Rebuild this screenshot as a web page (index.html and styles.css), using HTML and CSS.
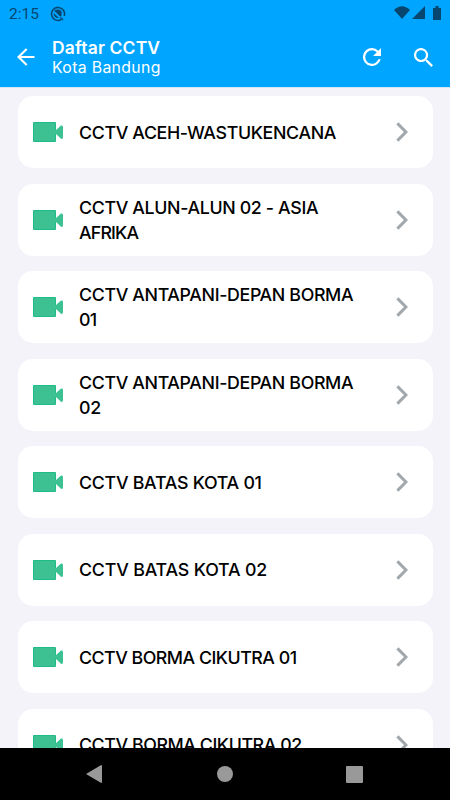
FILE: index.html
```html
<!DOCTYPE html>
<html lang="id">
<head>
<meta charset="utf-8">
<meta name="viewport" content="width=device-width, initial-scale=1">
<title>Daftar CCTV</title>
<link rel="stylesheet" href="styles.css">
</head>
<body>
<svg width="0" height="0" class="defs">
  <symbol id="cam" viewBox="0 0 31 20"><path fill="#3dc192" d="M1 0H22Q23 0 23 1V8L28 3.6Q30 3 30 5V15Q30 17.5 28 16.7L23 12V19Q23 20 22 20H1Q0 20 0 19V1Q0 0 1 0Z"/><path fill="none" stroke="#12b886" stroke-opacity=".7" d="M22.5 8V1.5Q22.5.5 21.5 .5H1.5Q.5.5.5 1.5V18.5Q.5 19.5 1.5 19.5H21.5Q22.5 19.5 22.5 18.5V12"/></symbol>
  <symbol id="chev" viewBox="0 0 12 20"><path fill="none" stroke="#a2a7ab" stroke-width="3" d="M1.4 1.4 10 10 1.4 18.6"/></symbol>
</svg>
<div class="screen">
  <header class="top">
    <div class="status">
      <span class="time">2:15</span>
      <svg class="notif" width="16" height="16" viewBox="0 0 16 16"><path d="M11.2 13.6A6.5 6.5 0 1 1 14.2 10" fill="none" stroke="#06466f" stroke-width="1.6"/><path d="M4 5Q7 2.5 10.5 4.2L11.8 6.2 11.5 9.8 10.2 10.8 6 6.2ZM3.6 7 9 12Q5.4 12.6 4 9.6Z" fill="#06466f"/><path d="M10.5 11.5 13 14" stroke="#06466f" stroke-width="1.4"/></svg>
      <svg class="signals" width="48" height="15" viewBox="0 0 48 15"><path fill="#06466f" d="M0 4Q8-3.5 16 4L8 13ZM31 0V13H18ZM39 2H41.5V0H44.5V2H47V14H39Z"/></svg>
    </div>
    <div class="bar">
      <svg class="back" width="18" height="18" viewBox="0 0 18 18"><path d="M17.5 9H2M9.7 1 1.5 9 9.7 17" fill="none" stroke="#fff" stroke-width="2.1"/></svg>
      <div class="titles"><h1>Daftar CCTV</h1><p>Kota Bandung</p></div>
      <svg class="refresh" width="18" height="18" viewBox="4 4 16 16"><path fill="#fff" d="M17.65 6.35A7.96 7.96 0 0 0 12 4a8 8 0 1 0 7.73 10h-2.08A6 6 0 1 1 12 6c1.66 0 3.14.69 4.22 1.78L13 11h7V4z"/></svg>
      <svg class="search" width="19" height="19" viewBox="3 3 17.5 17.5"><path fill="#fff" d="M15.5 14h-.79l-.28-.27A6.5 6.5 0 1 0 13.73 14.43l.27.28v.79l5 4.99L20.49 19zm-6 0a4.5 4.5 0 1 1 0-9 4.5 4.5 0 0 1 0 9z"/></svg>
    </div>
  </header>
  <main class="list">
    <div class="card"><svg class="cam"><use href="#cam"/></svg><div class="name"><span>CCTV ACEH-WASTUKENCANA</span></div><svg class="chev"><use href="#chev"/></svg></div>
    <div class="card"><svg class="cam"><use href="#cam"/></svg><div class="name"><span>CCTV ALUN-ALUN 02 - ASIA</span><span class="tighter">AFRIKA</span></div><svg class="chev"><use href="#chev"/></svg></div>
    <div class="card"><svg class="cam"><use href="#cam"/></svg><div class="name"><span>CCTV ANTAPANI-DEPAN BORMA</span><span class="tighter">01</span></div><svg class="chev"><use href="#chev"/></svg></div>
    <div class="card"><svg class="cam"><use href="#cam"/></svg><div class="name"><span>CCTV ANTAPANI-DEPAN BORMA</span><span class="loose">02</span></div><svg class="chev"><use href="#chev"/></svg></div>
    <div class="card"><svg class="cam"><use href="#cam"/></svg><div class="name"><span class="normal">CCTV BATAS KOTA 01</span></div><svg class="chev"><use href="#chev"/></svg></div>
    <div class="card"><svg class="cam"><use href="#cam"/></svg><div class="name"><span class="loose">CCTV BATAS KOTA 02</span></div><svg class="chev"><use href="#chev"/></svg></div>
    <div class="card"><svg class="cam"><use href="#cam"/></svg><div class="name"><span class="tight">CCTV BORMA CIKUTRA 01</span></div><svg class="chev"><use href="#chev"/></svg></div>
    <div class="card"><svg class="cam"><use href="#cam"/></svg><div class="name"><span class="snug">CCTV BORMA CIKUTRA 02</span></div><svg class="chev"><use href="#chev"/></svg></div>
  </main>
  <nav class="nav">
    <svg width="16" height="18" viewBox="0 0 16 18"><path fill="#999" d="M0 9 14.8.2Q16-.2 16 1V17Q16 18.2 14.8 17.8Z"/></svg>
    <svg class="home" width="16" height="16" viewBox="0 0 16 16"><circle cx="8" cy="8" r="8" fill="#999"/></svg>
    <svg width="17" height="17" viewBox="0 0 17 17"><rect width="17" height="17" rx="1" fill="#999"/></svg>
  </nav>
</div>
</body>
</html>
```

FILE: styles.css
```css
* { box-sizing: border-box; margin: 0; padding: 0; }
body { font-family: Inter, "Liberation Sans", sans-serif; background: #f3f3f9; }
svg { display: block; flex: none; }
.defs { position: absolute; }
.screen { width: 450px; height: 800px; display: flex; flex-direction: column; overflow: hidden; }
.top { height: 87px; flex: none; background: #00a5ff; box-shadow: 0 1px 0 #d3e7f5; }
.status { height: 27px; display: flex; align-items: center; padding: 0 8px 0 9px; color: #06466f; }
.time { font: 15.5px/18px Roboto, sans-serif; letter-spacing: 0; width: 41px; }
.signals { margin-left: auto; }
.bar { height: 60px; display: flex; align-items: center; padding: 0 16px 0 17px; color: #fff; }
.titles { width: 292px; margin-left: 17px; }
.titles h1 { font-size: 17.5px; line-height: 21px; font-weight: 600; letter-spacing: .15px; }
.titles p { font-size: 15.8px; line-height: 20px; letter-spacing: .34px; }
.refresh { margin-left: 18.5px; }
.search { margin-left: 33.5px; }
.list { flex: 1; min-height: 0; overflow: hidden; padding: 9px 17.5px 0; display: flex; flex-direction: column; gap: 15.5px; }
.card { height: 72px; flex: none; background: #fff; border-radius: 15px; display: flex; align-items: center; padding: 0 25px 0 15.5px; }
.cam { width: 31px; height: 20px; }
.name { flex: 1; margin-left: 15px; font-size: 17.8px; font-weight: 500; line-height: 25px; letter-spacing: -.35px; color: #000; white-space: nowrap; }
.name span { display: block; width: max-content; }
.name .loose { letter-spacing: -.17px; }
.name .normal { letter-spacing: -.27px; }
.name .snug { letter-spacing: -.42px; }
.name .tight { letter-spacing: -.5px; }
.name .tighter { letter-spacing: -.85px; }
.chev { width: 12px; height: 20px; }
.nav { height: 52px; flex: none; background: #000; display: flex; align-items: center; justify-content: space-between; padding: 0 87px 0 86px; }
.home { margin-left: 2px; }
```
